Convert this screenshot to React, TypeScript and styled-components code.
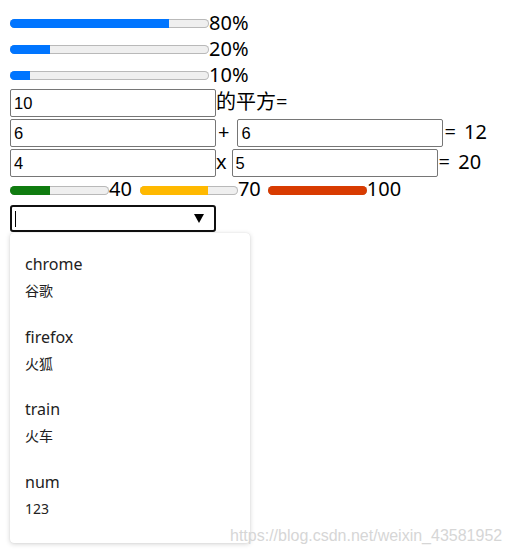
import React from "react";
import styled, { createGlobalStyle } from "styled-components";

const Global = createGlobalStyle`
  html, body { margin: 0; padding: 0; background: #fff; }
  body { font-family: "Noto Sans", "Noto Sans CJK SC", sans-serif; color: #000; }
  #root { position: relative; min-height: 553px; }
`;

const Page = styled.div`
  padding: 10px 0 0 10px;
  display: flex;
  flex-direction: column;
  align-items: flex-start;
`;

const BarRow = styled.div<{ $h: number }>`
  display: flex;
  align-items: center;
  height: ${(p) => p.$h}px;
`;

const Track = styled.div<{ $w: number }>`
  width: ${(p) => p.$w}px;
  height: 9px;
  border-radius: 5px;
  background: #efefef;
  box-shadow: inset 0 0 0 1px #b9b9b9;
  overflow: hidden;
  display: flex;
`;

const Fill = styled.div<{ $color: string }>`
  height: 100%;
  background: ${(p) => p.$color};
`;

const BarLabel = styled.span<{ $mr?: number; $lift?: number }>`
  font-size: 20px;
  line-height: 24px;
  margin-right: ${(p) => p.$mr ?? 0}px;
  margin-bottom: ${(p) => (p.$lift ?? 0) * 2}px;
  white-space: pre;
`;

const CalcRow = styled.div`
  display: flex;
  align-items: baseline;
  height: 30px;
`;

const NumInput = styled.div<{ $w?: number }>`
  box-sizing: border-box;
  width: ${(p) => p.$w ?? 206}px;
  height: 28px;
  margin-top: 1px;
  border: 1px solid #767676;
  border-radius: 2px;
  padding: 0 3px;
  display: flex;
  align-items: center;
  font-family: "Liberation Sans", Arial, sans-serif;
  font-size: 16.5px;
  color: #000;
`;

const Op = styled.span<{ $ml?: number; $mr?: number }>`
  font-size: 20px;
  line-height: 20px;
  margin-left: ${(p) => p.$ml ?? 0}px;
  margin-right: ${(p) => p.$mr ?? 0}px;
  word-spacing: 3px;
  white-space: pre;
`;

const SelectBox = styled.div`
  box-sizing: border-box;
  width: 206px;
  height: 27px;
  margin-top: 2px;
  border: 2px solid #101010;
  border-radius: 3px;
  display: flex;
  align-items: center;
  padding-left: 3px;
  padding-right: 10px;
`;

const Caret = styled.span`
  width: 1px;
  height: 16px;
  background: #000;
`;

const Arrow = styled.svg`
  margin-left: auto;
  display: block;
`;

const Popup = styled.div`
  box-sizing: border-box;
  width: 240px;
  height: 310px;
  margin-top: 1px;
  padding: 8px 0 12px;
  background: #fff;
  border-radius: 4px;
  box-shadow: 0 1px 5px rgba(0, 0, 0, 0.18), 0 0 1px rgba(0, 0, 0, 0.12);
`;

const Option = styled.div`
  padding: 12px 15px 12.5px;
  display: flex;
  flex-direction: column;
`;

const OptLabel = styled.span`
  font-size: 16px;
  line-height: 22px;
  color: #222;
`;

const OptSub = styled.span`
  font-size: 14px;
  line-height: 20px;
  margin-top: 6px;
  color: #222;
`;

const Watermark = styled.div`
  position: absolute;
  left: 230px;
  top: 527px;
  font-family: "Liberation Sans", Arial, sans-serif;
  font-size: 16px;
  line-height: 18px;
  color: #d6d6d6;
  white-space: nowrap;
`;

const progress = [80, 20, 10];

const meters = [
  { v: 40, color: "#107c10", w: 99, mr: 8 },
  { v: 70, color: "#ffb900", w: 98, mr: 7 },
  { v: 100, color: "#d83b01", w: 99, mr: 0 },
];

const options = [
  { label: "chrome", sub: "谷歌" },
  { label: "firefox", sub: "火狐" },
  { label: "train", sub: "火车" },
  { label: "num", sub: "123" },
];

export default function App() {
  return (
    <>
      <Global />
      <Page>
        {progress.map((p) => (
          <BarRow $h={26} key={p}>
            <Track $w={199}>
              <Fill $color="#0075ff" style={{ width: `${p}%` }} />
            </Track>
            <BarLabel>{p}%</BarLabel>
          </BarRow>
        ))}

        <CalcRow>
          <NumInput>10</NumInput>
          <Op>的平方=</Op>
        </CalcRow>
        <CalcRow>
          <NumInput>6</NumInput>
          <Op $ml={2} $mr={8}>+</Op>
          <NumInput>6</NumInput>
          <Op $ml={1}>= 12</Op>
        </CalcRow>
        <CalcRow>
          <NumInput>4</NumInput>
          <Op $mr={5}>x</Op>
          <NumInput>5</NumInput>
          <Op $ml={1}>= 20</Op>
        </CalcRow>

        <BarRow $h={25}>
          {meters.map((m) => (
            <React.Fragment key={m.v}>
              <Track $w={m.w}>
                <Fill $color={m.color} style={{ width: `${m.v}%` }} />
              </Track>
              <BarLabel $mr={m.mr} $lift={2}>
                {m.v}
              </BarLabel>
            </React.Fragment>
          ))}
        </BarRow>

        <SelectBox>
          <Caret />
          <Arrow width="10" height="9" viewBox="0 0 10 9">
            <polygon points="0,0 10,0 5,9" fill="#000" />
          </Arrow>
        </SelectBox>

        <Popup>
          {options.map((o) => (
            <Option key={o.label}>
              <OptLabel>{o.label}</OptLabel>
              <OptSub>{o.sub}</OptSub>
            </Option>
          ))}
        </Popup>
      </Page>
      <Watermark>https://blog.csdn.net/weixin_43581952</Watermark>
    </>
  );
}
